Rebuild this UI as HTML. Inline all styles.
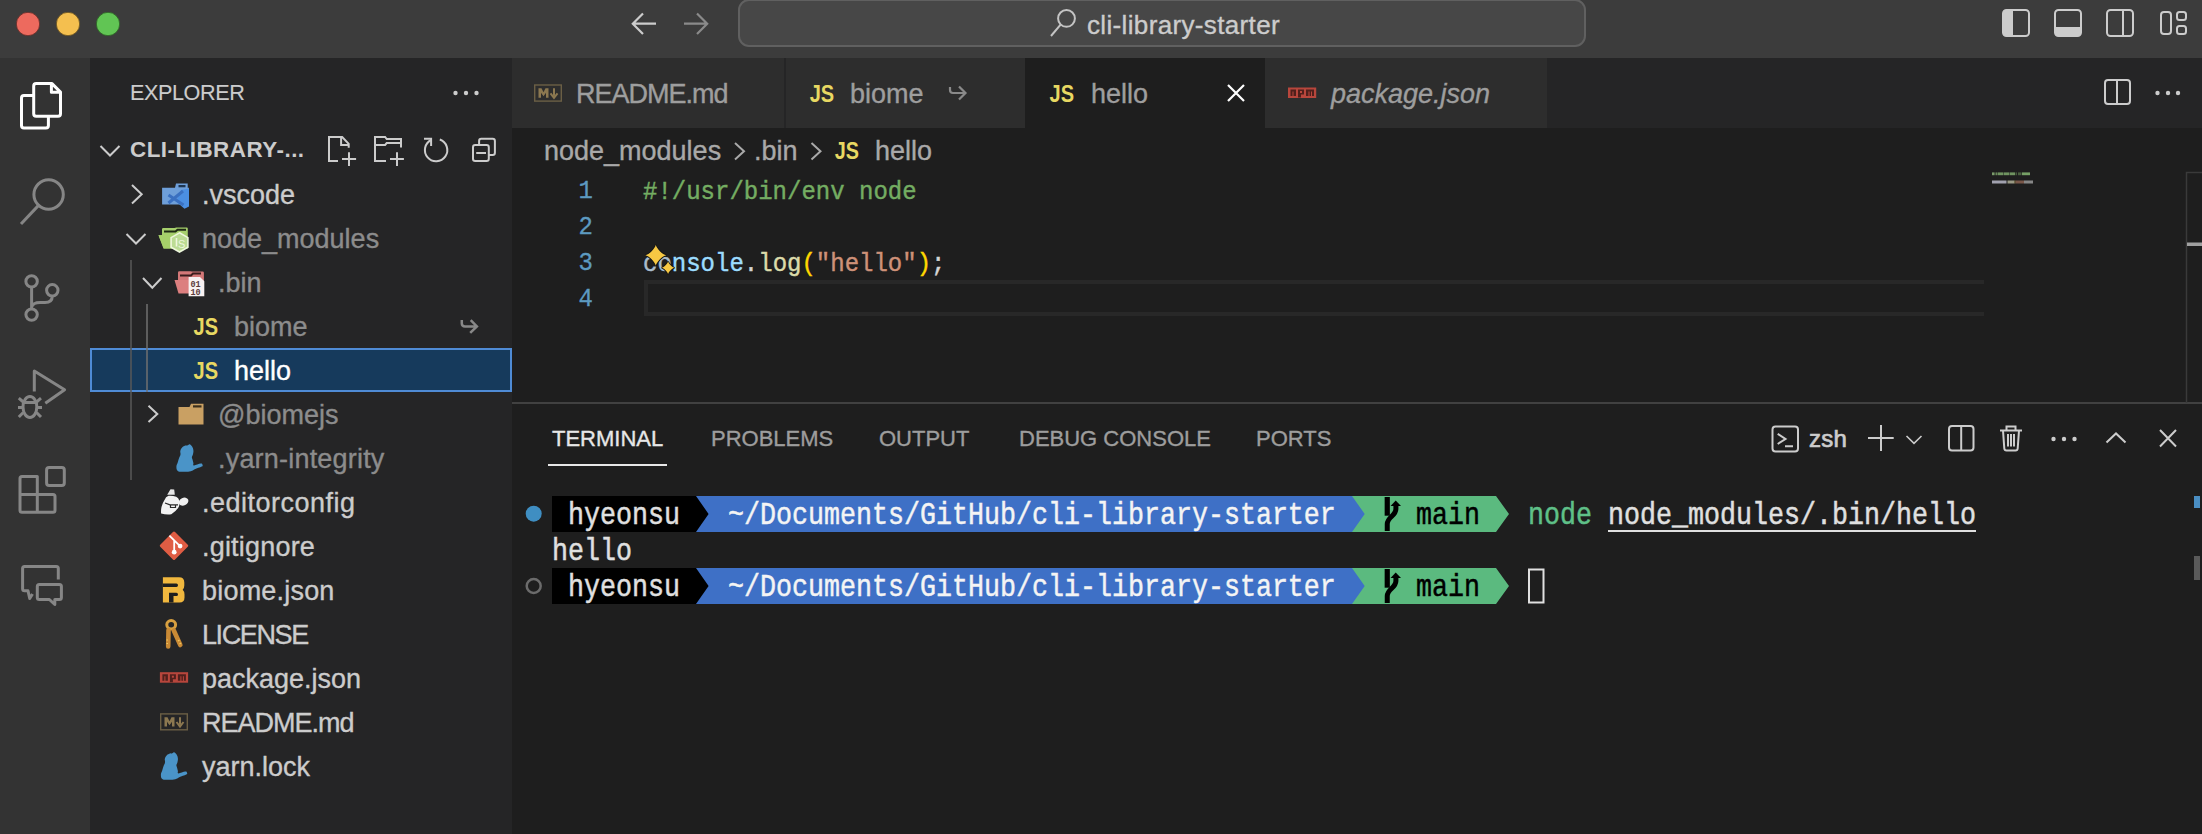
<!DOCTYPE html>
<html><head><meta charset="utf-8"><style>
*{margin:0;padding:0;box-sizing:border-box}
html,body{width:2202px;height:834px;overflow:hidden;background:#1e1e1e;font-family:"Liberation Sans",sans-serif}
.a{position:absolute}
.t{position:absolute;white-space:pre;line-height:44px;height:44px;-webkit-text-stroke:0.35px currentColor}
.ui{font-size:27px;color:#cccccc}
.dim{color:#8c8c8c}
.mono{font-family:"Liberation Mono",monospace}
.tm{position:absolute;font-family:"Liberation Mono",monospace;font-size:26.67px;line-height:36px;height:36px;white-space:pre;transform-origin:0 50%;transform:translateY(2px) scaleY(1.18);-webkit-text-stroke:0.4px currentColor}
svg{position:absolute;left:0;top:0}
</style></head><body>
<div class="a" style="left:0;top:0;width:2202px;height:58px;background:#3c3c3c"></div>
<div class="a" style="left:0;top:58px;width:90px;height:776px;background:#333333"></div>
<div class="a" style="left:90px;top:58px;width:422px;height:776px;background:#252526"></div>
<div class="a" style="left:512px;top:58px;width:1690px;height:70px;background:#252526"></div>
<div class="a" style="left:512px;top:58px;width:272px;height:70px;background:#2d2d2d"></div>
<div class="a" style="left:786px;top:58px;width:239px;height:70px;background:#2d2d2d"></div>
<div class="a" style="left:1025px;top:58px;width:240px;height:70px;background:#1e1e1e"></div>
<div class="a" style="left:1265px;top:58px;width:282px;height:70px;background:#2d2d2d"></div>
<div class="a" style="left:512px;top:128px;width:1690px;height:706px;background:#1e1e1e"></div>
<div class="a" style="left:738px;top:-1px;width:848px;height:48px;background:#474747;border:2px solid #606060;border-radius:11px"></div>
<div class="a" style="left:90px;top:348px;width:422px;height:44px;background:#163a5c;border:2px solid #4f8bd5"></div>
<div class="a" style="left:512px;top:402px;width:1690px;height:2px;background:#414141"></div>
<div class="a" style="left:644px;top:280px;width:1340px;height:36px;border:4px solid #282828;border-right:none"></div>
<div class="t" style="left:1087px;top:2.5px;font-size:26px;letter-spacing:0.35px;color:#cccccc">cli-library-starter</div>
<div class="t" style="left:130px;top:71px;font-size:21.6px;letter-spacing:-0.4px;color:#cccccc;-webkit-text-stroke:0.1px currentColor">EXPLORER</div>
<div class="t" style="left:130px;top:128px;font-size:22.4px;font-weight:bold;letter-spacing:0.5px;color:#cccccc;-webkit-text-stroke:0px">CLI-LIBRARY-...</div>
<div class="t ui" style="left:202px;top:173px;color:#cccccc;letter-spacing:0px">.vscode</div>
<div class="t ui" style="left:202px;top:217px;color:#8c8c8c;letter-spacing:0px">node_modules</div>
<div class="t ui" style="left:218px;top:261px;color:#8c8c8c;letter-spacing:0px">.bin</div>
<div class="t ui" style="left:234px;top:305px;color:#8c8c8c;letter-spacing:0px">biome</div>
<div class="t ui" style="left:234px;top:349px;color:#ffffff;letter-spacing:0px">hello</div>
<div class="t ui" style="left:218px;top:393px;color:#8c8c8c;letter-spacing:0px">@biomejs</div>
<div class="t ui" style="left:218px;top:437px;color:#8c8c8c;letter-spacing:0.2px">.yarn-integrity</div>
<div class="t ui" style="left:202px;top:481px;color:#cccccc;letter-spacing:0.5px">.editorconfig</div>
<div class="t ui" style="left:202px;top:525px;color:#cccccc;letter-spacing:0.2px">.gitignore</div>
<div class="t ui" style="left:202px;top:569px;color:#cccccc;letter-spacing:0.2px">biome.json</div>
<div class="t ui" style="left:202px;top:613px;color:#cccccc;letter-spacing:-1.4px">LICENSE</div>
<div class="t ui" style="left:202px;top:657px;color:#cccccc;letter-spacing:0px">package.json</div>
<div class="t ui" style="left:202px;top:701px;color:#cccccc;letter-spacing:-1.0px">README.md</div>
<div class="t ui" style="left:202px;top:745px;color:#cccccc;letter-spacing:0px">yarn.lock</div>
<div class="t ui" style="left:576px;top:72px;color:#9e9e9e;letter-spacing:-1px">README.md</div>
<div class="t ui" style="left:850px;top:72px;color:#9e9e9e">biome</div>
<div class="t ui" style="left:1091px;top:72px;color:#9e9e9e">hello</div>
<div class="t ui" style="left:1331px;top:72px;color:#9e9e9e;font-style:italic">package.json</div>
<div class="t ui" style="left:544px;top:129px;color:#a9a9a9">node_modules</div>
<div class="t ui" style="left:754px;top:129px;color:#a9a9a9">.bin</div>
<div class="t ui" style="left:875px;top:129px;color:#a9a9a9">hello</div>
<div class="a mono" style="left:557px;top:172px;width:36px;height:36px;font-size:24px;line-height:36px;color:#5d9ac0;text-align:right;transform-origin:0 50%;transform:translateY(2px) scaleY(1.06);-webkit-text-stroke:0.3px currentColor">1</div>
<div class="a mono" style="left:557px;top:208px;width:36px;height:36px;font-size:24px;line-height:36px;color:#5d9ac0;text-align:right;transform-origin:0 50%;transform:translateY(2px) scaleY(1.06);-webkit-text-stroke:0.3px currentColor">2</div>
<div class="a mono" style="left:557px;top:244px;width:36px;height:36px;font-size:24px;line-height:36px;color:#5d9ac0;text-align:right;transform-origin:0 50%;transform:translateY(2px) scaleY(1.06);-webkit-text-stroke:0.3px currentColor">3</div>
<div class="a mono" style="left:557px;top:280px;width:36px;height:36px;font-size:24px;line-height:36px;color:#5d9ac0;text-align:right;transform-origin:0 50%;transform:translateY(2px) scaleY(1.06);-webkit-text-stroke:0.3px currentColor">4</div>
<div class="a mono" style="left:643px;top:175px;height:36px;font-size:24px;line-height:36px;white-space:pre;color:#74ad62;transform-origin:0 50%;transform:scaleY(1.05);-webkit-text-stroke:0.4px currentColor">#!/usr/bin/env node</div><div class="a mono" style="left:643px;top:247px;height:36px;font-size:24px;line-height:36px;white-space:pre;color:#d4d4d4;transform-origin:0 50%;transform:scaleY(1.05);-webkit-text-stroke:0.4px currentColor"><span style="color:#a9bccc">co</span><span style="color:#9cdcfe">nsole</span>.<span style="color:#dcdcaa">log</span><span style="color:#ffd700">(</span><span style="color:#ce9178">"hello"</span><span style="color:#ffd700">)</span>;</div>
<div class="t" style="left:552px;top:417px;font-size:22px;color:#e7e7e7">TERMINAL</div>
<div class="t" style="left:711px;top:417px;font-size:22px;color:#9d9d9d">PROBLEMS</div>
<div class="t" style="left:879px;top:417px;font-size:22px;color:#9d9d9d">OUTPUT</div>
<div class="t" style="left:1019px;top:417px;font-size:22px;color:#9d9d9d">DEBUG CONSOLE</div>
<div class="t" style="left:1256px;top:417px;font-size:22px;color:#9d9d9d">PORTS</div>
<div class="a" style="left:548px;top:464px;width:119px;height:2px;background:#e7e7e7"></div>
<div class="t" style="left:1809px;top:417px;font-size:24px;letter-spacing:0.2px;color:#cccccc;-webkit-text-stroke:0.7px currentColor">zsh</div>
<div class="a" style="left:552px;top:496px;width:144px;height:36px;background:#000"></div>
<div class="a" style="left:696px;top:496px;width:656px;height:36px;background:#3e70c6"></div>
<div class="a" style="left:1352px;top:496px;width:144px;height:36px;background:#5bba7f"></div>
<div class="tm" style="left:568px;top:496px;color:#e0e0e0">hyeonsu</div>
<div class="tm" style="left:728px;top:496px;color:#f4f4f4">~/Documents/GitHub/cli-library-starter</div>
<div class="tm" style="left:1416px;top:496px;color:#000">main</div>
<div class="a" style="left:552px;top:568px;width:144px;height:36px;background:#000"></div>
<div class="a" style="left:696px;top:568px;width:656px;height:36px;background:#3e70c6"></div>
<div class="a" style="left:1352px;top:568px;width:144px;height:36px;background:#5bba7f"></div>
<div class="tm" style="left:568px;top:568px;color:#e0e0e0">hyeonsu</div>
<div class="tm" style="left:728px;top:568px;color:#f4f4f4">~/Documents/GitHub/cli-library-starter</div>
<div class="tm" style="left:1416px;top:568px;color:#000">main</div>
<div class="tm" style="left:1528px;top:496px;color:#5fc088">node</div>
<div class="tm" style="left:1608px;top:496px;color:#e0e0e0">node_modules/.bin/hello</div>
<div class="a" style="left:1608px;top:530px;width:368px;height:2px;background:#e0e0e0"></div>
<div class="tm" style="left:552px;top:532px;color:#e0e0e0">hello</div>
<svg width="2202" height="834" viewBox="0 0 2202 834" fill="none">
<circle cx="28" cy="24" r="11.7" fill="#ed6a5e" stroke="#5a2a26" stroke-width="0.8"/>
<circle cx="68" cy="24" r="11.7" fill="#f4bf4f" stroke="#5e4a1e" stroke-width="0.8"/>
<circle cx="108" cy="24" r="11.7" fill="#61c554" stroke="#2a5a22" stroke-width="0.8"/>
<path d="M656 23.7H633M643 13.5L632.8 23.7L643 34" stroke="#cccccc" stroke-width="2.2"/>
<path d="M684 23.7H707M697 13.5L707.2 23.7L697 34" stroke="#8a8a8a" stroke-width="2.2"/>
<circle cx="1066.5" cy="18.4" r="8.4" stroke="#c4c4c4" stroke-width="2"/><path d="M1051 36L1060.6 24.6" stroke="#c4c4c4" stroke-width="2"/>
<rect x="2003" y="10" width="26" height="26" rx="3.5" stroke="#cccccc" stroke-width="2"/><path d="M2006 10H2013V36H2006Q2003 36 2003 33V13Q2003 10 2006 10Z" fill="#cccccc"/>
<rect x="2055" y="10" width="26" height="26" rx="3.5" stroke="#cccccc" stroke-width="2"/><path d="M2055 27H2081V33Q2081 36 2078 36H2058Q2055 36 2055 33Z" fill="#cccccc"/>
<rect x="2107" y="10" width="26" height="26" rx="3.5" stroke="#cccccc" stroke-width="2"/><path d="M2123 10V36" stroke="#cccccc" stroke-width="2"/>
<rect x="2161" y="12" width="10" height="22" rx="3" stroke="#cccccc" stroke-width="2"/><rect x="2177" y="12" width="9" height="8" rx="2.5" stroke="#cccccc" stroke-width="2"/><rect x="2177" y="26" width="9" height="8" rx="2.5" stroke="#cccccc" stroke-width="2"/>
<rect x="2105" y="80" width="25" height="24" rx="3" stroke="#cccccc" stroke-width="2"/><path d="M2117 80V104" stroke="#cccccc" stroke-width="2"/>
<circle cx="2157.5" cy="93" r="2.2" fill="#cccccc"/><circle cx="2168" cy="93" r="2.2" fill="#cccccc"/><circle cx="2178" cy="93" r="2.2" fill="#cccccc"/>
<path d="M33.7 95.5H24Q21.5 95.5 21.5 98V125.6Q21.5 128.1 24 128.1H45.9Q48.4 128.1 48.4 125.6V116.2" stroke="#ffffff" stroke-width="3" stroke-linejoin="round"/>
<path d="M36.2 83.6H52L60.5 92.1V113.7Q60.5 116.2 58 116.2H36.2Q33.7 116.2 33.7 113.7V86.1Q33.7 83.6 36.2 83.6Z M51.4 83.6V92.2H60.5" stroke="#ffffff" stroke-width="3" stroke-linejoin="round"/>
<circle cx="48.6" cy="194.5" r="14.7" stroke="#868686" stroke-width="3"/><path d="M21 224L38.3 205.6" stroke="#868686" stroke-width="3"/>
<circle cx="31.6" cy="281.4" r="5.7" stroke="#868686" stroke-width="3"/><circle cx="52.3" cy="290.3" r="5.7" stroke="#868686" stroke-width="3"/><circle cx="31.6" cy="314.6" r="5.7" stroke="#868686" stroke-width="3"/><path d="M31.6 287.1V308.9M31.6 307Q33 302.5 40 302.5H45Q52.3 302.5 52.3 296" stroke="#868686" stroke-width="3"/>
<path d="M34.3 391.5V371L64.6 389.8L45.3 403.2" stroke="#868686" stroke-width="3" stroke-linejoin="round"/><ellipse cx="29.9" cy="407" rx="6.9" ry="10.5" stroke="#868686" stroke-width="3"/><path d="M23 402.4H37M18.8 398.2L23.3 402M41 398.2L36.5 402M18 407.6H23M36.8 407.6H42M18.8 417L23.3 412.5M41 417L36.5 412.5" stroke="#868686" stroke-width="3"/>
<path d="M22 476.6H37.3V494.4H53Q55 494.4 55 496.4V510.3Q55 512.3 53 512.3H22Q20 512.3 20 510.3V478.6Q20 476.6 22 476.6ZM20 494.4H37.3V512.3" stroke="#868686" stroke-width="3" stroke-linejoin="round"/><rect x="46.6" y="467.4" width="17.7" height="18" rx="2.5" stroke="#868686" stroke-width="3"/>
<path d="M58.3 579.4V568.4Q58.3 566.4 56.3 566.4H24.6Q22.6 566.4 22.6 568.4V588.7Q22.6 590.7 24.6 590.7H28L29.7 598.5L32.5 594" stroke="#868686" stroke-width="3" stroke-linejoin="round"/><path d="M39.3 584.4H59.4Q61.4 584.4 61.4 586.4V597.5Q61.4 599.5 59.4 599.5H54.8V604.5L49.4 599.5H39.3Q37.3 599.5 37.3 597.5V586.4Q37.3 584.4 39.3 584.4Z" stroke="#868686" stroke-width="3" stroke-linejoin="round"/>
<circle cx="455.5" cy="93" r="2.2" fill="#cccccc"/><circle cx="466" cy="93" r="2.2" fill="#cccccc"/><circle cx="476.5" cy="93" r="2.2" fill="#cccccc"/>
<path d="M100.5 146L110 155.5L119.5 146" stroke="#cccccc" stroke-width="2"/>
<path d="M338 161H329V137H342.2L348.7 143.8V147.8M341.1 137V144.9H348.7M349 152.3V166M342 159H356.1" stroke="#cccccc" stroke-width="2"/>
<path d="M386 161H375V137H385.1L386.7 139H401V147.5M375 144.9H385.1L386.7 143H401M397 152.3V166M390 159H403.9" stroke="#cccccc" stroke-width="2"/>
<path d="M439.8 139.5A11.2 11.2 0 1 1 431.2 140" stroke="#cccccc" stroke-width="2"/><path d="M424 138.8H431.1V146" stroke="#cccccc" stroke-width="2"/>
<path d="M479.1 145V141Q479.1 138.8 481.3 138.8H492.7Q494.9 138.8 494.9 141V152.7Q494.9 154.9 492.7 154.9H488.8" stroke="#cccccc" stroke-width="2"/><rect x="473" y="145.1" width="15.8" height="15.9" rx="2.2" stroke="#cccccc" stroke-width="2"/><path d="M476.2 153H486" stroke="#cccccc" stroke-width="2"/>
<path d="M132 185L141.7 194.2L132 203.4" stroke="#cccccc" stroke-width="2"/>
<path d="M126.5 234L136 243.5L145.5 234" stroke="#cccccc" stroke-width="2"/>
<path d="M143 278L152.3 287.8L161.5 278" stroke="#cccccc" stroke-width="2"/>
<path d="M148.5 405.7L157.3 413.9L148.5 422" stroke="#cccccc" stroke-width="2"/>
<path d="M131 260V480" stroke="#585858" stroke-width="1.5"/>
<path d="M147 304V392" stroke="#707070" stroke-width="1.5"/>
<path d="M461.8 320V323.5Q461.8 326.4 465 326.4H476.5M470.7 320.1L476.9 326.4L470.2 332.9" stroke="#888888" stroke-width="2.5"/>
<path d="M950 87V90Q950 93 953 93H965M959 86.5L965.5 93L959 99.5" stroke="#8a8a8a" stroke-width="2.2"/>
<path d="M1228 85L1244 101M1244 85L1228 101" stroke="#ffffff" stroke-width="2.2"/>
<path d="M735 143L744 151.2L735 159.5" stroke="#a9a9a9" stroke-width="2"/>
<path d="M811.5 143L820.5 151.2L811.5 159.5" stroke="#a9a9a9" stroke-width="2"/>
<rect x="1772.5" y="426.5" width="25.5" height="25" rx="3" stroke="#cccccc" stroke-width="2"/><path d="M1777.7 433.9L1785.5 439L1777.7 444M1785 446.2H1793" stroke="#cccccc" stroke-width="2"/>
<path d="M1881 425V451M1868 438H1893.7" stroke="#cccccc" stroke-width="2"/><path d="M1906.5 436L1914 443.3L1921.5 436" stroke="#cccccc" stroke-width="1.6"/>
<rect x="1949" y="426" width="24.5" height="24.5" rx="3" stroke="#cccccc" stroke-width="2"/><path d="M1961.2 426V450.5" stroke="#cccccc" stroke-width="2"/>
<path d="M2000 430.5H2022M2006.5 430.5V426.5H2015.5V430.5M2003 430.5L2004.3 448.5Q2004.5 450.5 2006.5 450.5H2015.5Q2017.5 450.5 2017.7 448.5L2019 430.5M2008 434V446.5M2011 434V446.5M2014 434V446.5" stroke="#cccccc" stroke-width="2"/>
<circle cx="2053.5" cy="439" r="2.2" fill="#cccccc"/><circle cx="2064" cy="439" r="2.2" fill="#cccccc"/><circle cx="2074.5" cy="439" r="2.2" fill="#cccccc"/>
<path d="M2106.5 442.5L2116 433.5L2125.5 442.5" stroke="#cccccc" stroke-width="2"/>
<path d="M2160 430L2176 446.5M2176 430L2160 446.5" stroke="#cccccc" stroke-width="2"/>
<path d="M2186.5 403V172.5H2202" stroke="#3a3a3a" stroke-width="1.5"/><rect x="2187" y="242.5" width="15" height="3.5" fill="#a0a0a0"/>
<rect x="1992" y="172.4" width="2.6" height="2.8" fill="#7a9a6a"/>
<rect x="1995.5" y="172.4" width="1.5" height="2.8" fill="#6a8a5a"/>
<rect x="1997.5" y="172.4" width="5.5" height="2.8" fill="#6f9360"/>
<rect x="2003.5" y="172.4" width="5.5" height="2.8" fill="#6f9360"/>
<rect x="2009.5" y="172.4" width="5.5" height="2.8" fill="#6f9360"/>
<rect x="2015.5" y="172.4" width="1.5" height="2.8" fill="#445a3a"/>
<rect x="2018" y="172.4" width="3.5" height="2.8" fill="#4a6040"/>
<rect x="2022" y="172.4" width="8" height="2.8" fill="#76a066"/>
<rect x="1992" y="180.5" width="14.5" height="3" fill="#b8b8c8" opacity="0.85"/>
<rect x="2007.5" y="180.5" width="7" height="3" fill="#b0b098" opacity="0.85"/>
<rect x="2014.5" y="180.5" width="1" height="3" fill="#8a7a40" opacity="0.85"/>
<rect x="2015.5" y="180.5" width="8.5" height="3" fill="#8a6050" opacity="0.85"/>
<rect x="2024" y="180.5" width="9" height="3" fill="#9a9a9a" opacity="0.85"/>
<circle cx="533.7" cy="513.7" r="8" fill="#3f8ec2"/><circle cx="533.7" cy="586" r="7" stroke="#6b6b6b" stroke-width="2.5"/>
<path d="M696 496L708.6 514L696 532ZM696 568L708.6 586L696 604Z" fill="#000000"/>
<path d="M1352 496L1364.7 514L1352 532ZM1352 568L1364.7 586L1352 604Z" fill="#3e70c6"/>
<path d="M1496 496L1509 514L1496 532ZM1496 568L1509 586L1496 604Z" fill="#5bba7f"/>
<path d="M1387.25 497V515.7" stroke="#000" stroke-width="5.2"/><path d="M1387.25 531V524C1387.25 517 1395.9 516 1395.9 509V505" stroke="#000" stroke-width="5"/><path d="M1390.6 506L1395.7 500.6L1401 506Z" fill="#000"/>
<path d="M1387.25 569V587.7" stroke="#000" stroke-width="5.2"/><path d="M1387.25 603V596C1387.25 589 1395.9 588 1395.9 581V577" stroke="#000" stroke-width="5"/><path d="M1390.6 578L1395.7 572.6L1401 578Z" fill="#000"/>
<rect x="1529" y="569.5" width="14.5" height="33" stroke="#e0e0e0" stroke-width="2"/>
<rect x="2194" y="496" width="6" height="12" fill="#4a8ec2"/><rect x="2194" y="556" width="6" height="24" fill="#5a5a5a"/>
<text x="193.5" y="335.0" font-family="Liberation Sans" font-weight="bold" font-size="24.44" fill="#e8d862" textLength="24.5" lengthAdjust="spacingAndGlyphs">JS</text>
<text x="193.5" y="379.0" font-family="Liberation Sans" font-weight="bold" font-size="24.44" fill="#e8d862" textLength="24.5" lengthAdjust="spacingAndGlyphs">JS</text>
<text x="809.7" y="102.0" font-family="Liberation Sans" font-weight="bold" font-size="24.44" fill="#e8d862" textLength="24.5" lengthAdjust="spacingAndGlyphs">JS</text>
<text x="1049.5" y="102.0" font-family="Liberation Sans" font-weight="bold" font-size="24.44" fill="#e8d862" textLength="24.5" lengthAdjust="spacingAndGlyphs">JS</text>
<text x="834.8" y="159.0" font-family="Liberation Sans" font-weight="bold" font-size="23.32" fill="#e8d862" textLength="24.2" lengthAdjust="spacingAndGlyphs">JS</text>
<rect x="534.7" y="85.0" width="26.6" height="16.1" stroke="#6b5f45" stroke-width="1.4"/><path d="M538.5 97.8V88.3H541.5L543.5 92.3L545.5 88.3H548.5V97.8H546V92.8L543.5 96.3L541 92.8V97.8Z" fill="#8c7850"/><path d="M554 88.3V95.8M550.5 93.3L554 97.8L557.5 93.3" stroke="#8c7850" stroke-width="2"/>
<rect x="160.7" y="713.9000000000001" width="26.6" height="15.9" stroke="#6b5f45" stroke-width="1.4"/><path d="M164.5 726.5V717.2H167.5L169.5 721.2L171.5 717.2H174.5V726.5H172V721.7L169.5 725.2L167 721.7V726.5Z" fill="#8c7850"/><path d="M180 717.2V724.5M176.5 722.0L180 726.5L183.5 722.0" stroke="#8c7850" stroke-width="2"/>
<rect x="159.9" y="672.2" width="28.2" height="10.5" fill="#b8463c"/><path d="M162.4 674.2H167.9V680.7H165.4V676.2H164.4V680.7H162.4ZM169.9 674.2H175.9V679.2H172.9V682.2H169.9ZM177.9 674.2H185.9V680.7H183.9V676.2H182.9V680.7H181.4V676.2H180.4V680.7H177.9Z" fill="#50201c"/><rect x="171.9" y="675.7" width="2" height="2" fill="#b8463c"/>
<rect x="1288" y="87.5" width="28.2" height="10.5" fill="#b8463c"/><path d="M1290.5 89.5H1296V96.0H1293.5V91.5H1292.5V96.0H1290.5ZM1298 89.5H1304V94.5H1301V97.5H1298ZM1306 89.5H1314V96.0H1312V91.5H1311V96.0H1309.5V91.5H1308.5V96.0H1306Z" fill="#50201c"/><rect x="1300" y="91.0" width="2" height="2" fill="#b8463c"/>
<path d="M162.1 187.8H175L176 183.5H187.7V187.8H188.9V204.5H162.1Z" fill="#6e9fd9"/><rect x="178.5" y="185" width="7" height="2.3" fill="#1e3550"/>
<path d="M181 190L189 188.5V206.5L184.5 208.8L176 201.5Z" fill="#4b8fe2"/><path d="M168.5 195L183.5 205M168.5 203L183 191" stroke="#3a70c0" stroke-width="3"/>
<path d="M162 235V229.2Q162 228 163.2 228H174.5L176.3 227.5H186.6Q187.8 227.5 187.8 228.7V248.5H163.8L158.5 235.3Z" fill="#a6cf6c"/><path d="M164 231.5H175.5L177.5 229.8H186" stroke="#1f2a14" stroke-width="2"/><path d="M158.5 235.3H185V248.5H163.5Z" fill="#a6d06a"/>
<path d="M179.5 232.8L187.9 237.6V247.2L179.5 252L171.1 247.2V237.6Z" fill="#bcdc94" stroke="#eef7dc" stroke-width="1.6"/><path d="M176.5 238V246.5" stroke="#eef7dc" stroke-width="1.6"/><text x="178" y="248" font-family="Liberation Sans" font-size="11" fill="#eef7dc">S</text>
<path d="M178 280V272.5Q178 271.3 179.2 271.3H190.5L192 271.5H202.7Q203.9 271.5 203.9 272.7V290H178Z" fill="#d47878"/><path d="M180 275.5H191L193 273.5H201" stroke="#3a1d1d" stroke-width="2"/><path d="M174.5 280H189V293.5H178.5Z" fill="#dc7f7f"/>
<path d="M188.6 277H200L204.3 281.3V296.2H188.6Z" fill="#f7f1f1"/><text x="190.5" y="286.5" font-family="Liberation Mono" font-size="8.5" font-weight="bold" fill="#5a3a3a">01</text><text x="190.5" y="295" font-family="Liberation Mono" font-size="8.5" font-weight="bold" fill="#5a3a3a">10</text>
<path d="M178.5 407H189.5L191 403.7H203.5V424.6H178.5Z" fill="#c9a063"/><rect x="193" y="405.3" width="8.5" height="2.2" fill="#3a2e1c"/>
<path d="M174.00 752.30C174.86 752.56 175.82 753.36 176.60 754.60C177.38 755.84 177.74 756.94 177.90 758.50C178.06 760.06 177.70 761.10 177.40 762.40C177.10 763.70 176.48 763.96 176.40 765.00C176.32 766.04 176.70 766.40 177.00 767.60C177.30 768.80 177.62 769.84 177.90 771.00C178.18 772.16 176.94 773.28 178.40 773.40C179.86 773.52 183.48 771.70 185.20 771.60C186.92 771.50 186.80 772.30 187.00 772.90C187.20 773.50 187.76 773.72 186.20 774.60C184.64 775.48 181.38 776.36 179.20 777.30C177.02 778.24 177.54 778.80 175.30 779.30C173.06 779.80 170.60 779.86 168.00 779.80C165.40 779.74 163.72 780.06 162.30 779.00C160.88 777.94 160.90 776.26 160.90 774.50C160.90 772.74 161.76 771.92 162.30 770.20C162.84 768.48 163.06 767.46 163.60 765.90C164.14 764.34 164.76 763.78 165.00 762.40C165.24 761.02 164.56 760.30 164.80 759.00C165.04 757.70 165.32 756.94 166.20 755.90C167.08 754.86 167.98 754.32 169.20 753.80C170.42 753.28 171.34 753.60 172.30 753.30C173.26 753.00 173.14 752.04 174.00 752.30Z" fill="#4a94c8" transform="translate(0 0)"/>
<path d="M174.00 752.30C174.86 752.56 175.82 753.36 176.60 754.60C177.38 755.84 177.74 756.94 177.90 758.50C178.06 760.06 177.70 761.10 177.40 762.40C177.10 763.70 176.48 763.96 176.40 765.00C176.32 766.04 176.70 766.40 177.00 767.60C177.30 768.80 177.62 769.84 177.90 771.00C178.18 772.16 176.94 773.28 178.40 773.40C179.86 773.52 183.48 771.70 185.20 771.60C186.92 771.50 186.80 772.30 187.00 772.90C187.20 773.50 187.76 773.72 186.20 774.60C184.64 775.48 181.38 776.36 179.20 777.30C177.02 778.24 177.54 778.80 175.30 779.30C173.06 779.80 170.60 779.86 168.00 779.80C165.40 779.74 163.72 780.06 162.30 779.00C160.88 777.94 160.90 776.26 160.90 774.50C160.90 772.74 161.76 771.92 162.30 770.20C162.84 768.48 163.06 767.46 163.60 765.90C164.14 764.34 164.76 763.78 165.00 762.40C165.24 761.02 164.56 760.30 164.80 759.00C165.04 757.70 165.32 756.94 166.20 755.90C167.08 754.86 167.98 754.32 169.20 753.80C170.42 753.28 171.34 753.60 172.30 753.30C173.26 753.00 173.14 752.04 174.00 752.30Z" fill="#4a94c8" transform="translate(15.5 -308)"/>
<path d="M161.1 513.4Q166 514.8 171.3 514.2Q176.5 511 178.7 506.9Q180 503.5 179.5 501.1Q178.5 497.5 176.2 496.7Q172 495.3 168.5 495.8Q165.5 497 164.8 499.5Q162.5 503 161.5 506.9Q160.8 510.5 161.1 513.4Z" fill="#f2f2f2"/>
<path d="M167.2 494.8L170.5 489.3L174.2 489.5L174.8 494.8Z" fill="#e6e6e6"/><ellipse cx="183.6" cy="501.6" rx="5" ry="3.8" transform="rotate(-25 183.6 501.6)" fill="#f0f0f0"/>
<path d="M165 503L170 504.8H178M170.5 504.8V507.5H175.5V504.8" stroke="#2a2a2a" stroke-width="1.2"/>
<path d="M174 533L186.7 545.7L174 558.4L161.3 545.7Z" fill="#e05d44" stroke="#e05d44" stroke-width="3" stroke-linejoin="round"/><path d="M169.4 535.6L174.2 540.4V552M174.2 540.4L180.1 546.1" stroke="#ffffff" stroke-width="1.8"/><circle cx="174.2" cy="552.2" r="2.4" fill="#fff"/><circle cx="180.1" cy="546.1" r="2.4" fill="#fff"/>
<path d="M162.9 577.3H179Q184.3 577.3 184.3 582.5V585.5Q184.3 588 182.7 589.8Q184.5 591.5 184.5 594.5V597.5Q184.5 602.6 179.5 602.6H162.9Z" fill="#f1b83e"/><path d="M162.9 583.4H176.4Q178 583.4 178 585.15Q178 586.9 176.4 586.9H162.9ZM169 592.8H176.4Q178 592.8 178 594.4Q178 596 176.4 596H173.5V602.6H169Z" fill="#1f1f1f"/>
<ellipse cx="171.2" cy="624.8" rx="4.4" ry="4.2" stroke="#d8a040" stroke-width="3"/><path d="M168.5 630L168.2 646.5M173.8 630.5L180.3 645" stroke="#c98a35" stroke-width="4.6" stroke-linecap="round"/><path d="M166.5 640H168M166.5 643.5H168M178 641L179.5 640M179.5 644L181 643" stroke="#f0c860" stroke-width="1.2"/>
<path d="M655.8 244.8C656.32 248.37 662.73 254.78 666.30 255.30C662.73 255.83 656.32 262.23 655.80 265.80C655.27 262.23 648.87 255.83 645.30 255.30C648.87 254.78 655.27 248.37 655.80 244.80Z M668.1 261.3C668.43 263.51 672.39 267.48 674.60 267.80C672.39 268.12 668.43 272.09 668.10 274.30C667.77 272.09 663.81 268.12 661.60 267.80C663.81 267.48 667.77 263.51 668.10 261.30Z" fill="#f7c843" stroke="#141414" stroke-width="1.6" paint-order="stroke"/>
</svg>
</body></html>
